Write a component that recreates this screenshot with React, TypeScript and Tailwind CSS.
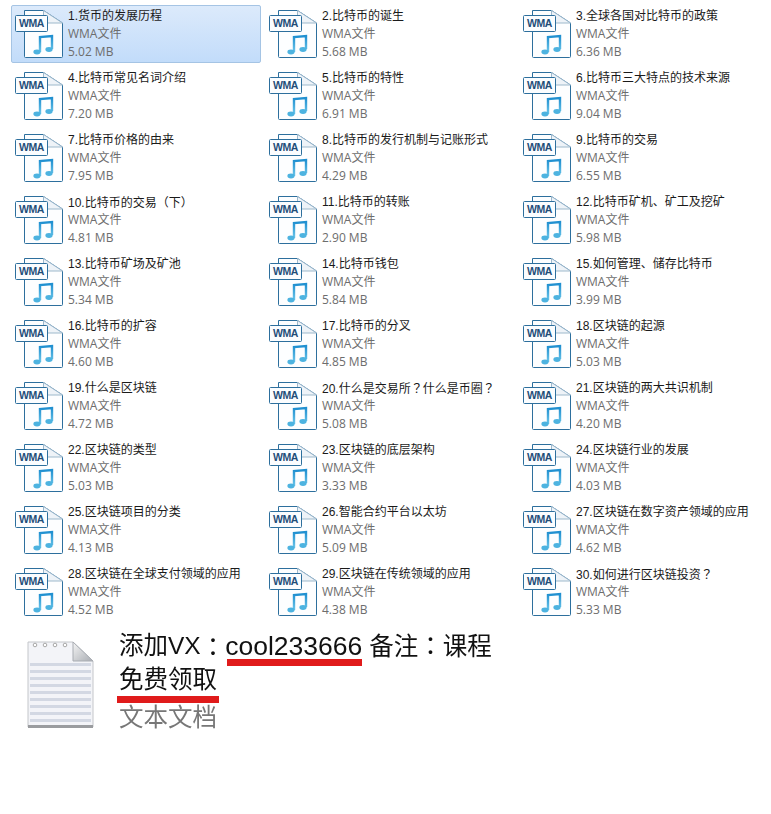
import type { ReactNode } from "react";

const files: [string, string][] = [
  ["1.货币的发展历程", "5.02 MB"], ["2.比特币的诞生", "5.68 MB"], ["3.全球各国对比特币的政策", "6.36 MB"],
  ["4.比特币常见名词介绍", "7.20 MB"], ["5.比特币的特性", "6.91 MB"], ["6.比特币三大特点的技术来源", "9.04 MB"],
  ["7.比特币价格的由来", "7.95 MB"], ["8.比特币的发行机制与记账形式", "4.29 MB"], ["9.比特币的交易", "6.55 MB"],
  ["10.比特币的交易（下）", "4.81 MB"], ["11.比特币的转账", "2.90 MB"], ["12.比特币矿机、矿工及挖矿", "5.98 MB"],
  ["13.比特币矿场及矿池", "5.34 MB"], ["14.比特币钱包", "5.84 MB"], ["15.如何管理、储存比特币", "3.99 MB"],
  ["16.比特币的扩容", "4.60 MB"], ["17.比特币的分叉", "4.85 MB"], ["18.区块链的起源", "5.03 MB"],
  ["19.什么是区块链", "4.72 MB"], ["20.什么是交易所？什么是币圈？", "5.08 MB"], ["21.区块链的两大共识机制", "4.20 MB"],
  ["22.区块链的类型", "5.03 MB"], ["23.区块链的底层架构", "3.33 MB"], ["24.区块链行业的发展", "4.03 MB"],
  ["25.区块链项目的分类", "4.13 MB"], ["26.智能合约平台以太坊", "5.09 MB"], ["27.区块链在数字资产领域的应用", "4.62 MB"],
  ["28.区块链在全球支付领域的应用", "4.52 MB"], ["29.区块链在传统领域的应用", "4.38 MB"], ["30.如何进行区块链投资？", "5.33 MB"],
];

function Punct({ children }: { children: ReactNode }) {
  return <span className="font-['Noto_Sans_CJK_TC',sans-serif]">{children}</span>;
}

function withPunct(text: string) {
  return text.split(/([？（）])/).map((part, i) =>
    /^[？（）]$/.test(part) ? <Punct key={i}>{part}</Punct> : part
  );
}

function WmaIcon() {
  return (
    <div className="relative w-[48px] h-[48px] shrink-0">
      <svg width="48" height="48" viewBox="0 0 48 48" className="absolute left-0 top-0">
        <defs>
          <linearGradient id="note" x1="0" y1="0" x2="0" y2="1">
            <stop offset="0" stopColor="#1f8fd0" />
            <stop offset="1" stopColor="#6cc6ea" />
          </linearGradient>
        </defs>
        <path d="M9.5 0.5H28.5L47.5 13V46.5a1 1 0 0 1-1 1H10.5a1 1 0 0 1-1-1Z" fill="#fdfeff" stroke="#2d6f9d" strokeWidth="1" />
        <path d="M28.5 0.5V13H47.5Z" fill="#eef3f8" stroke="#9db8cc" strokeWidth="1" />
        <path d="M25 42V27L37 26V39" fill="none" stroke="url(#note)" strokeWidth="2.4" />
        <ellipse cx="22" cy="42" rx="3.6" ry="2.4" fill="#4db3e0" />
        <ellipse cx="34" cy="39.5" rx="3.6" ry="2.4" fill="#4db3e0" />
        <rect x="0.5" y="5.5" width="32" height="16" rx="1" fill="#fbfdff" stroke="#2d6f9d" strokeWidth="1" />
      </svg>
      <span className="absolute left-0 top-[5px] w-[33px] h-[17px] flex items-center justify-center text-[10.5px] font-bold leading-none text-[#1f4e79] font-['Liberation_Sans',sans-serif] tracking-[-0.4px]">WMA</span>
    </div>
  );
}

function DocIcon() {
  return (
    <svg width="70" height="90" viewBox="0 0 70 90" className="shrink-0 blur-[0.4px]">
      <defs>
        <linearGradient id="fold" x1="0" y1="0" x2="1" y2="1">
          <stop offset="0" stopColor="#f5f5f5" />
          <stop offset="1" stopColor="#a9adb3" />
        </linearGradient>
      </defs>
      <path d="M1 3H46L66 22V88H1Z" fill="#f3f4f8" stroke="#c4c6ca" strokeWidth="1" />
      <rect x="1" y="86" width="65" height="3" fill="#9a9c9f" />
      {[24, 31, 38, 45, 52, 59, 66, 73, 80].map((y) => (
        <rect key={y} x="3" y={y} width="61" height="3" fill="#d3d8e3" />
      ))}
      {[8, 18, 28, 38].map((x) => (
        <circle key={x} cx={x} cy="6" r="1.8" fill="#fff" stroke="#a8a8a8" strokeWidth="1" />
      ))}
      <path d="M46 3L66 22H46Z" fill="url(#fold)" stroke="#a8acb2" strokeWidth="1" />
    </svg>
  );
}

export default function App() {
  return (
    <div className="w-[771px] h-[814px] bg-white overflow-hidden font-['Liberation_Sans','Noto_Sans_CJK_SC',sans-serif]">
      <div className="grid grid-cols-[254px_254px_254px] auto-rows-[62px] pl-[11px] pt-[5px]">
        {files.map(([name, size], i) => (
          <div
            key={name}
            className={`w-[250px] h-[58px] flex rounded-[2px] border pl-[3px] pt-[4px] ${
              i === 0 ? "border-[#a5c4e4] bg-gradient-to-b from-[#dceafb] to-[#c2dcfa]" : "border-transparent"
            }`}
          >
            <WmaIcon />
            <div className="ml-[5px] -mt-[3px] text-[12px] leading-[18px] whitespace-nowrap">
              <div className="h-[18px] text-[#1a1a1a]">{withPunct(name)}</div>
              <div className="text-[#6d6d6d] font-['Open_Sans','Noto_Sans_CJK_SC',sans-serif]">WMA文件</div>
              <div className="text-[#6d6d6d] font-['Open_Sans','Noto_Sans_CJK_SC',sans-serif]">{size}</div>
            </div>
          </div>
        ))}
      </div>
      <div className="flex pl-[27px] mt-[14px]">
        <DocIcon />
        <div className="ml-[22px] w-[390px] -mt-[10px] text-[24.5px] leading-none blur-[0.4px]">
          <div className="relative h-[34px] flex items-center text-[#111111] whitespace-nowrap">
            添加VX<Punct>：</Punct>
            <span className="relative text-[26.5px]">
              cool233666
              <span className="absolute left-[2px] right-0 top-[26px] h-[7px] bg-[#e01b1b]" />
            </span>
            <span className="ml-[7px]">备注<Punct>：</Punct>课程</span>
          </div>
          <div className="relative h-[34px] flex items-center text-[#111111]">
            免费领取
            <span className="absolute left-[-2px] top-[33px] w-[102px] h-[7px] bg-[#e01b1b]" />
          </div>
          <div className="h-[42px] flex items-center text-[#777777]">文本文档</div>
        </div>
      </div>
    </div>
  );
}
